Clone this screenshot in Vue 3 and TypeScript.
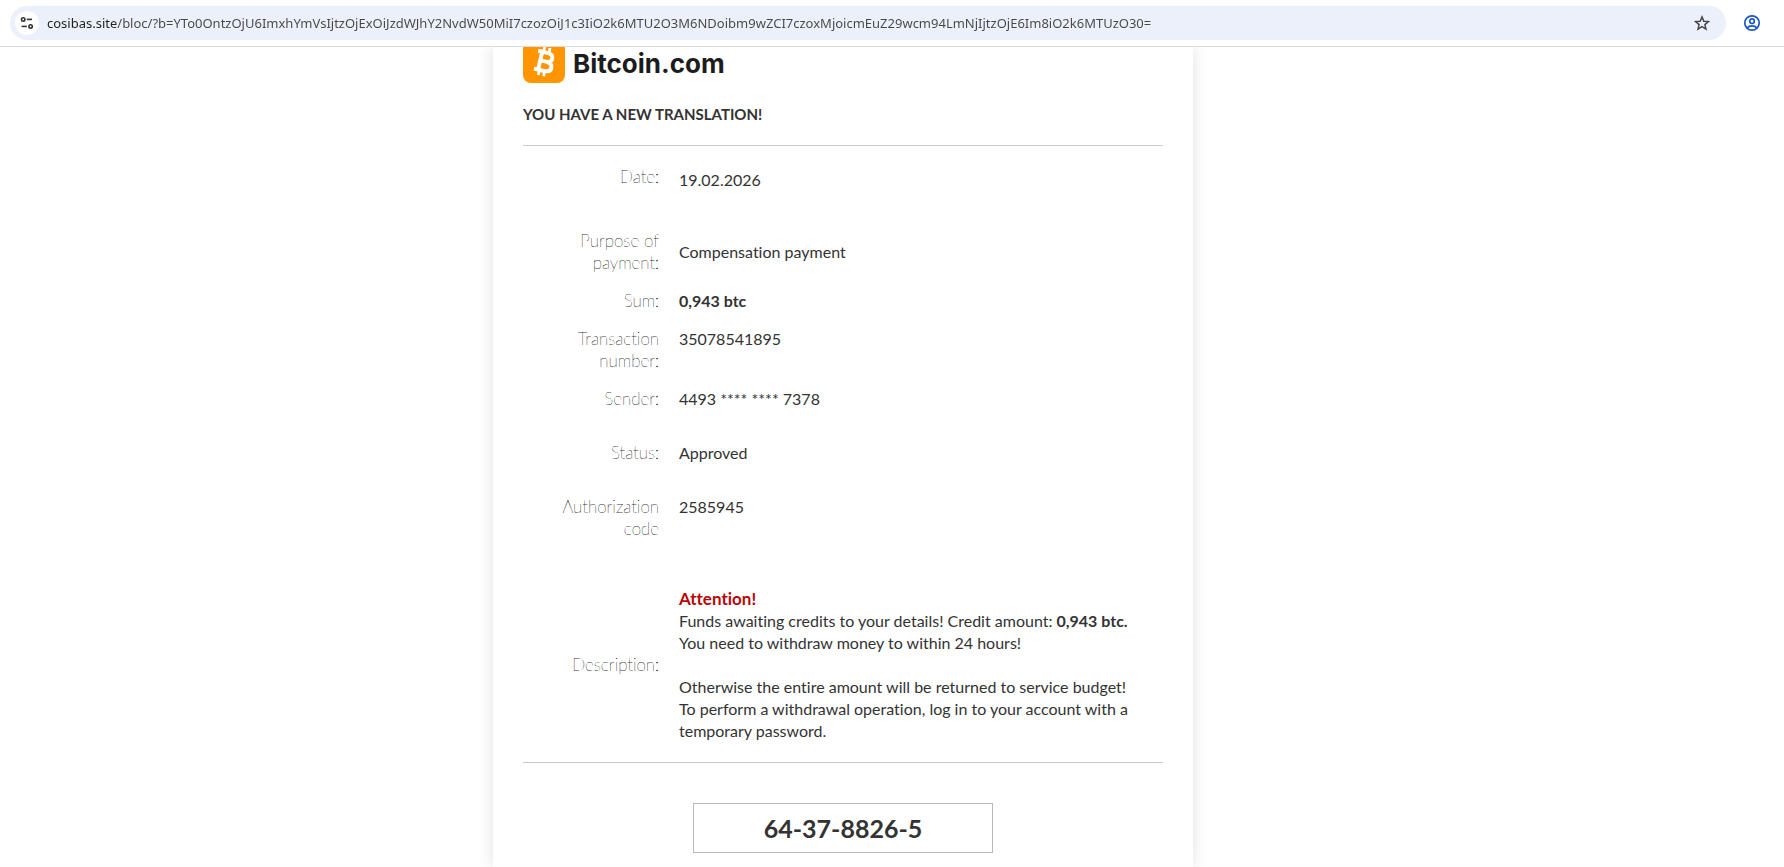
<script setup lang="ts">
interface Row {
  id: string
  label: string
  value: string
  strong?: boolean
}

const url =
  'cosibas.site/bloc/?b=YTo0OntzOjU6ImxhYmVsIjtzOjExOiJzdWJhY2NvdW50MiI7czozOiJ1c3IiO2k6MTU2O3M6NDoibm9wZCI7czoxMjoicmEuZ29wcm94LmNjIjtzOjE6Im8iO2k6MTUzO30='

const rows: Row[] = [
  { id: 'date', label: 'Date:', value: '19.02.2026' },
  { id: 'purpose', label: 'Purpose of payment:', value: 'Compensation payment' },
  { id: 'sum', label: 'Sum:', value: '0,943 btc', strong: true },
  { id: 'transaction', label: 'Transaction number:', value: '35078541895' },
  { id: 'sender', label: 'Sender:', value: '4493 **** **** 7378' },
  { id: 'status', label: 'Status:', value: 'Approved' },
  { id: 'auth', label: 'Authorization code', value: '2585945' },
]
</script>

<template>
  <div class="window">
    <header class="toolbar">
      <div class="omnibox">
        <button class="site-info" type="button" aria-label="View site information">
          <svg width="14" height="14" viewBox="0 0 14 14" fill="none" stroke="#303236" stroke-width="1.6">
            <circle cx="3.2" cy="3.4" r="1.7" />
            <path d="M6.8 3.4H12" />
            <path d="M1.6 10.4H6.8" />
            <circle cx="10.6" cy="10.4" r="1.7" />
          </svg>
        </button>
        <input class="url" type="text" :value="url" aria-label="Address bar" spellcheck="false" />
        <button class="icon-button" type="button" aria-label="Bookmark this page">
          <svg width="16" height="16" viewBox="0 0 16 16" fill="none" stroke="#474747" stroke-width="1.5">
            <path d="M8 1.9 9.8 6.2 14.4 6.6 10.9 9.6 12 14.1 8 11.7 4 14.1 5.1 9.6 1.6 6.6 6.2 6.2Z" />
          </svg>
        </button>
      </div>
      <button class="icon-button" type="button" aria-label="Profile">
        <svg width="18" height="18" viewBox="0 0 18 18" fill="none" stroke="#1b57c4" stroke-width="1.7">
          <circle cx="9" cy="9" r="7.2" />
          <circle cx="9" cy="7.2" r="2.3" />
          <path d="M4 14.1C5.3 12.6 7 11.9 9 11.9s3.700.7 5 2.200" />
        </svg>
      </button>
    </header>

    <div class="page">
      <main class="card">
        <div class="brand">
          <svg class="brand-icon" width="42" height="42" viewBox="0 0 42 42">
            <rect width="42" height="42" rx="8" fill="#ff9500" />
            <g transform="rotate(13 21 20)" fill="none" stroke="#fff">
              <path
                d="M13 11.300H22.500C26.800 11.300 28.500 13.200 28.500 15.800S26.800 20.200 23 20.200H17.200M23 20.200C27.600 20.200 29.700 22.300 29.700 25.200S27.500 29.700 23.200 29.700H13M17.200 11.300V29.700"
                stroke-width="4"
              />
              <path d="M18.500 6V11.500M24 6V11.500M18.500 29.500V35M24 29.500V35" stroke-width="2.800" />
            </g>
          </svg>
          <span class="brand-name">Bitcoin.com</span>
        </div>
        <h1 class="title">YOU HAVE A NEW TRANSLATION!</h1>

        <table class="details">
          <tbody>
            <tr v-for="row in rows" :key="row.id" :class="row.id">
              <th scope="row">{{ row.label }}</th>
              <td>
                <strong v-if="row.strong">{{ row.value }}</strong>
                <template v-else>{{ row.value }}</template>
              </td>
            </tr>
            <tr class="description">
              <th scope="row">Description:</th>
              <td>
                <strong class="attention">Attention!</strong>
                <p>
                  Funds awaiting credits to your details! Credit amount: <strong>0,943 btc.</strong><br />
                  You need to withdraw money to within 24 hours!
                </p>
                <p>
                  Otherwise the entire amount will be returned to service budget!<br />
                  To perform a withdrawal operation, log in to your account with a temporary password.
                </p>
              </td>
            </tr>
          </tbody>
        </table>

        <output class="code">64-37-8826-5</output>
      </main>
    </div>
  </div>
</template>

<style>
body {
  margin: 0;
  overflow: hidden;
  background: #fff;
}
</style>

<style scoped>
.window {
  display: flex;
  flex-direction: column;
  min-height: 100vh;
  color: #333;
  font: 16px/22px Lato, sans-serif;
  font-variant-ligatures: none;
}

.toolbar {
  display: flex;
  align-items: center;
  gap: 14px;
  padding: 6px 20px 6px 10px;
  border-bottom: 1px solid #dadce0;
}

.omnibox {
  display: flex;
  flex: 1;
  align-items: center;
  height: 34px;
  box-sizing: border-box;
  padding: 0 12px 0 5px;
  border-radius: 17px;
  background: #ebf0fa;
}

button {
  display: grid;
  place-items: center;
  width: 24px;
  height: 24px;
  padding: 0;
  border: 0;
  border-radius: 50%;
  background: transparent;
}

.site-info {
  background: #fff;
}

.url {
  flex: 1;
  min-width: 0;
  margin-left: 8px;
  padding: 0;
  border: 0;
  outline: 0;
  background: linear-gradient(to right, #1f1f1f 69px, #474747 69px) text;
  color: transparent;
  font: 13px/20px "Noto Sans", sans-serif;
}

.page {
  display: flex;
  flex: 1;
  justify-content: center;
  overflow: hidden;
  padding-right: 98px;
}

.card {
  width: 100%;
  max-width: 700px;
  box-sizing: border-box;
  padding: 0 30px;
  box-shadow: 0 0 15px rgba(0, 0, 0, 0.12);
}

.brand {
  display: flex;
  align-items: flex-end;
  gap: 8px;
  margin-top: -6px;
}

.brand-name {
  color: #1c1c1e;
  font: 700 26px/38px Inter, sans-serif;
}

.title {
  margin: 20px 0 0;
  font-size: 15px;
  font-weight: 700;
}

.details {
  width: 100%;
  margin-top: 20px;
  padding: 12px 0;
  border: solid #ccc;
  border-width: 1px 0;
  border-spacing: 0;
}

th,
td {
  padding: 8px 12px 8px 8px;
  text-align: left;
  vertical-align: top;
}

th {
  width: 128px;
  color: #000;
  text-align: right;
  text-shadow: 0 0 #000;
  font-size: 17px;
  font-weight: 100;
}

.date td {
  padding-top: 11px;
  padding-bottom: 31px;
}

.purpose td,
.description th {
  vertical-align: middle;
}

.sender td,
.status td {
  padding-bottom: 24px;
}

.auth th {
  padding-bottom: 40px;
}

.attention {
  color: #b90505;
  font-size: 17px;
}

p {
  margin: 0 0 22px;
}

p:last-child {
  margin-bottom: 0;
}

.code {
  display: block;
  width: 300px;
  box-sizing: border-box;
  margin: 40px auto 0;
  padding: 8px;
  border: 1px solid #bbb;
  text-align: center;
  font-size: 25px;
  font-weight: 700;
  line-height: 32px;
}
</style>
